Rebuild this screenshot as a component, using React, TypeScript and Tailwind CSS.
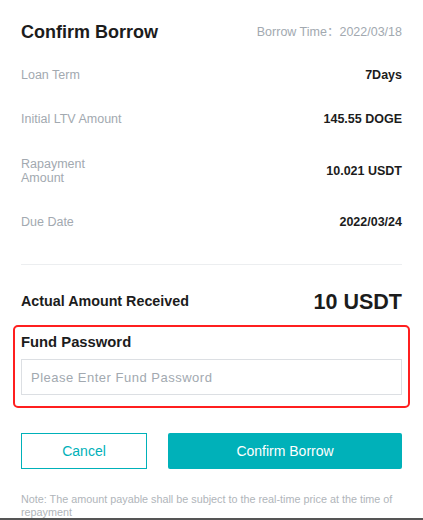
export default function App() {
  const rows = [
    { label: "Loan Term", value: "7Days" },
    { label: "Initial LTV Amount", value: "145.55 DOGE" },
  ];

  return (
    <div className="relative w-[423px] h-[520px] overflow-hidden bg-white font-['Liberation_Sans','Noto_Sans_CJK_SC',sans-serif]">
      <div className="px-[21px] pt-[20px]">
        {/* Header */}
        <div className="flex items-center justify-between h-[24px]">
          <h1 className="text-[18px] font-bold text-[#1c1c1c]">Confirm Borrow</h1>
          <span className="text-[12.5px] text-[#a2a9b0]">Borrow Time：2022/03/18</span>
        </div>

        {/* Details */}
        <div className="mt-[23px] flex flex-col gap-[28px]">
          {rows.map((row) => (
            <div key={row.label} className="flex items-center justify-between h-[16px]">
              <span className="text-[12.5px] text-[#a2a9b0]">{row.label}</span>
              <span className="text-[12.5px] font-bold text-[#1c1c1c]">{row.value}</span>
            </div>
          ))}
        </div>
        <div className="mt-[30px] flex items-center justify-between">
          <span className="text-[12.5px] leading-[14px] text-[#a2a9b0]">
            Rapayment
            <br />
            Amount
          </span>
          <span className="text-[12.5px] font-bold text-[#1c1c1c]">10.021 USDT</span>
        </div>
        <div className="mt-[29px] flex items-center justify-between h-[16px]">
          <span className="text-[12.5px] text-[#a2a9b0]">Due Date</span>
          <span className="text-[12.5px] font-bold text-[#1c1c1c]">2022/03/24</span>
        </div>

        <div className="mt-[34px] h-px bg-[#eceef0]" />

        <div className="mt-[24px] flex items-center justify-between h-[26px]">
          <span className="text-[14.3px] font-bold text-[#1c1c1c]">Actual Amount Received</span>
          <span className="text-[21.5px] font-bold text-[#1c1c1c]">10 USDT</span>
        </div>

        {/* Fund password (highlighted) */}
        <div className="mt-[10px] mx-[-8px] px-[6px] pt-[6px] pb-[11px] border-2 border-[#ff1f1f] rounded-[5px]">
          <div className="h-[18px] flex items-center text-[14.8px] font-bold text-[#1c1c1c]">Fund Password</div>
          <input
            type="password"
            placeholder="Please Enter Fund Password"
            className="mt-[8px] w-full h-[36px] px-[9px] border border-[#dcdfe3] text-[13px] tracking-[0.5px] outline-none placeholder:text-[#a2a9b0]"
          />
        </div>

        {/* Actions */}
        <div className="mt-[25px] flex gap-[21px]">
          <button className="w-[126px] h-[36px] border border-[#00b1b9] text-[14px] text-[#00b1b9] bg-white">
            Cancel
          </button>
          <button className="flex-1 h-[36px] rounded-[2px] bg-[#00b1b9] text-[14px] text-white">
            Confirm Borrow
          </button>
        </div>

        <p className="mt-[24px] text-[10.8px] leading-[13px] text-[#b0b5ba]">
          Note: The amount payable shall be subject to the real-time price at the time of repayment
        </p>
      </div>

      <div className="absolute left-0 right-0 top-[518px] h-[2px] bg-[#555]" />
    </div>
  );
}
